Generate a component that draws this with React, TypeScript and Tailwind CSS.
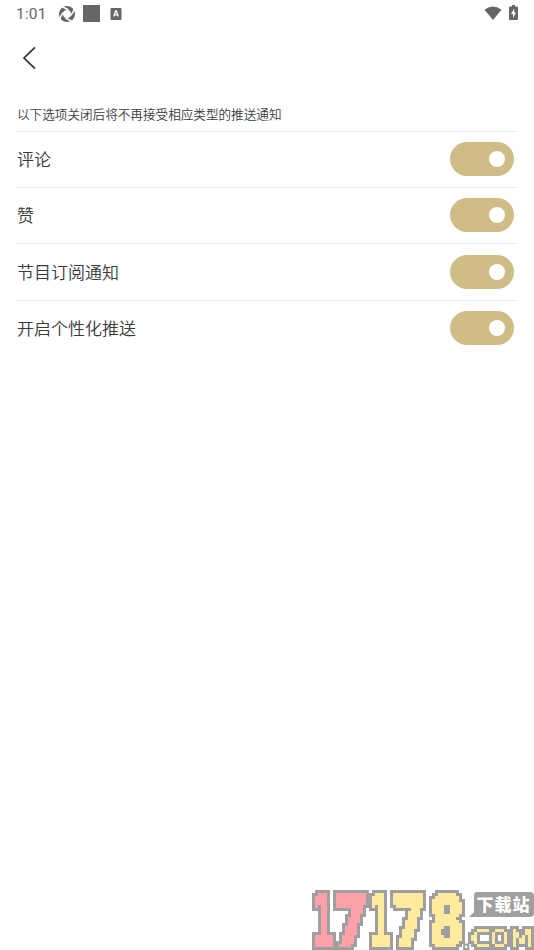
const DIGITS = [
  { ch: "1", x: 315, w: 18, left: 0.117, ink: 0.536, fill: "#fda1a9" },
  { ch: "7", x: 337, w: 28, left: 0.059, ink: 0.575, fill: "#fda1a9" },
  { ch: "1", x: 373, w: 18, left: 0.117, ink: 0.536, fill: "#feeb9e" },
  { ch: "7", x: 395, w: 28, left: 0.059, ink: 0.575, fill: "#feeb9e" },
  { ch: "8", x: 431, w: 31, left: 0.045, ink: 0.605, fill: "#feeb9e" },
];

const COM = [
  { ch: "C", x: 472.5, w: 15.5, left: 0.056, ink: 0.59 },
  { ch: "O", x: 491, w: 17, left: 0.056, ink: 0.675 },
  { ch: "M", x: 512, w: 19, left: 0.098, ink: 0.67 },
];

function StatusBar() {
  return (
    <header className="flex h-[27px] items-center justify-between pl-4 pr-4 text-[#666]">
      <div className="flex h-[27px] items-center">
        <span className="w-[43px] whitespace-nowrap pt-[3px] text-[15.5px] font-normal tracking-[0.2px]" style={{ fontFamily: "Roboto, sans-serif" }}>1:01</span>
        <svg className="h-4 w-4" viewBox="0 0 16 16">
          <circle cx="8" cy="8" r="6" fill="none" stroke="currentColor" strokeWidth="4" />
          <g stroke="white" strokeWidth="1.5">
            <path d="M3 .5 9.500 4M15.500 3 12 9.500M13 15.500 6.500 12M.5 13 4 6.500" />
          </g>
        </svg>
        <div className="ml-2 h-[17px] w-[17px] bg-[#666]" />
        <svg className="ml-[10px] h-3 w-3" viewBox="0 0 12 12">
          <rect x=".5" width="11" height="12" rx="1" fill="currentColor" />
          <path d="m3.700 8.500 1.900-5.500h.8l1.900 5.500M4.500 6.800h3" fill="none" stroke="white" strokeWidth="1.300" />
        </svg>
      </div>
      <div className="flex items-center pb-0.5">
        <svg className="mr-[7px] h-[14px] w-[18px]" viewBox="0 0 18 14">
          <path d="M.5 3.800Q9-3 17.500 3.800L9 14Z" fill="currentColor" />
        </svg>
        <svg className="h-[15px] w-[9px]" viewBox="0 0 9 15">
          <path d="M3 0h3v1.500h2q1 0 1 1V14q0 1-1 1H1q-1 0-1-1V2.500q0-1 1-1h2Z" fill="currentColor" />
          <path d="M5.300 3.500 2 9h2v4l3-5.500H5.300Z" fill="white" />
        </svg>
      </div>
    </header>
  );
}

function Toggle() {
  return (
    <button role="switch" aria-checked="true" className="mb-px mr-[3.500px] flex h-[34px] w-16 items-center justify-end rounded-full bg-[#cfbc87] pr-[9px]">
      <span className="h-4 w-4 rounded-full bg-white" />
    </button>
  );
}

function SiteLogo() {
  return (
    <svg className="absolute bottom-0 right-0 h-[66px] w-[228px]" viewBox="306 884 228 66">
      <defs>
        <filter id="pixels" filterUnits="userSpaceOnUse" x="306" y="884" width="228" height="66" colorInterpolationFilters="sRGB">
          <feFlood x="307" y="885" width="1" height="1" floodColor="black" result="dot" />
          <feOffset in="dot" x="306" y="884" width="3" height="3" result="cell" />
          <feTile in="cell" result="grid" />
          <feComponentTransfer in="SourceGraphic" result="solid">
            <feFuncA type="discrete" tableValues="0 1" />
          </feComponentTransfer>
          <feComposite in="solid" in2="grid" operator="in" />
          <feMorphology operator="dilate" radius="1" result="blocks" />
          <feMorphology in="blocks" operator="dilate" radius="3" result="wide" />
          <feFlood floodColor="#a09e9e" />
          <feComposite in2="wide" operator="in" result="outline" />
          <feMerge>
            <feMergeNode in="outline" />
            <feMergeNode in="blocks" />
          </feMerge>
        </filter>
      </defs>
      <g fontFamily="DejaVu Sans" strokeLinejoin="miter">
        <g filter="url(#pixels)" fontWeight="700">
          {DIGITS.map((d, i) => {
            const sx = d.w / (d.ink * 70);
            return (
              <text key={i} fontSize="70" fill={d.fill} stroke={d.fill} strokeWidth="3" transform={`translate(${d.x - d.left * 70 * sx} 945.5) scale(${sx} 1)`}>
                {d.ch}
              </text>
            );
          })}
        </g>
        <g fontWeight="400" fill="#feeb9e">
          <text x="463" y="947.500" fontSize="20" fill="#fff" stroke="#a09e9e" strokeWidth="4" paintOrder="stroke">.</text>
          <g filter="url(#pixels)">
            {COM.map((d) => {
              const sx = d.w / (d.ink * 24);
              return (
                <text key={d.ch} fontSize="24" stroke="#feeb9e" strokeWidth="0.500" transform={`translate(${d.x - d.left * 24 * sx} 946.5) scale(${sx} 1)`}>
                  {d.ch}
                </text>
              );
            })}
          </g>
        </g>
      </g>
      <path d="M477 892h53q4 0 4 4v17q0 4-4 4h-61l5-5v-16q0-4 3-4Z" fill="#a09e9e" />
      <text x="476.500" y="911" fontSize="17" fontWeight="900" fontFamily="Noto Sans CJK SC, sans-serif" fill="white" textLength="53">下载站</text>
    </svg>
  );
}

export default function App() {
  const rows = ["评论", "赞", "节目订阅通知", "开启个性化推送"];
  return (
    <div className="relative flex h-[950px] w-[534px] flex-col overflow-hidden bg-white font-[350] text-[#3a3a3a]" style={{ fontFamily: '"Noto Sans CJK SC", sans-serif' }}>
      <StatusBar />
      <nav className="flex h-[61px] items-center pl-[22px]">
        <svg className="h-6 w-[14px]" viewBox="0 0 14 24">
          <path d="M13 1.300 2 12l11 10.700" fill="none" stroke="#333" strokeWidth="1.700" />
        </svg>
      </nav>
      <main className="px-[17px] pt-[15px]">
        <p className="h-[27.900px] pt-[0.500px] text-[12.600px] leading-5">以下选项关闭后将不再接受相应类型的推送通知</p>
        {rows.map((r) => (
          <div key={r} className="flex h-[56.300px] items-center justify-between border-t border-[#e6e6e6]">
            <span className="mb-px text-[17px] leading-6">{r}</span>
            <Toggle />
          </div>
        ))}
      </main>
      <SiteLogo />
    </div>
  );
}
